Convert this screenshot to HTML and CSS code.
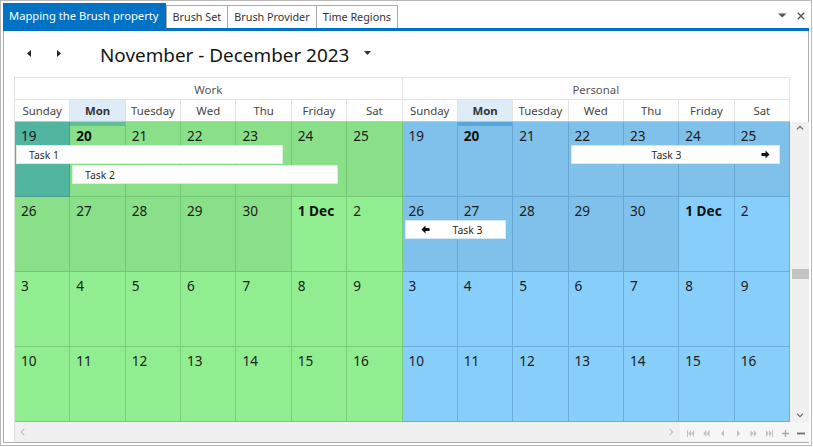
FILE: index.html
```html
<!DOCTYPE html>
<html>
<head>
<meta charset="utf-8">
<link rel="stylesheet" href="styles.css">
</head>
<body>
<div class="frame">
  <div class="tabbar">
    <div class="tabs">
      <div class="tab active">Mapping the Brush property</div>
      <div class="tab">Brush Set</div>
      <div class="tab">Brush Provider</div>
      <div class="tab">Time Regions</div>
    </div>
    <div class="tab-tools">
      <svg class="tool-caret" width="9" height="5" viewBox="0 0 9 5"><path d="M0 0.5 H8.5 L4.25 4.5 Z" fill="#555"/></svg>
      <svg class="tool-close" width="8" height="8" viewBox="0 0 8 8"><path d="M0.8 0.8 L7.2 7.2 M7.2 0.8 L0.8 7.2" stroke="#555" stroke-width="1.4" fill="none"/></svg>
    </div>
  </div>
  <div class="tabline"></div>
  <div class="panel">
    <div class="toolbar">
      <button class="nav-btn"><svg width="4" height="7" viewBox="0 0 4 7"><path d="M4 0 L0 3.5 L4 7 Z" fill="#222"/></svg></button>
      <button class="nav-btn"><svg width="4" height="7" viewBox="0 0 4 7"><path d="M0 0 L4 3.5 L0 7 Z" fill="#222"/></svg></button>
      <div class="title">November - December 2023</div>
      <svg class="title-caret" width="7" height="4" viewBox="0 0 7 4"><path d="M0 0 H7 L3.5 4 Z" fill="#333"/></svg>
    </div>
    <div class="scheduler">
      <div class="header">
        <div class="groups">
          <div class="group">Work</div>
          <div class="group">Personal</div>
        </div>
        <div class="days">
          <div class="day">Sunday</div>
          <div class="day today-head">Mon</div>
          <div class="day">Tuesday</div>
          <div class="day">Wed</div>
          <div class="day">Thu</div>
          <div class="day">Friday</div>
          <div class="day">Sat</div>
          <div class="day">Sunday</div>
          <div class="day today-head">Mon</div>
          <div class="day">Tuesday</div>
          <div class="day">Wed</div>
          <div class="day">Thu</div>
          <div class="day">Friday</div>
          <div class="day">Sat</div>
        </div>
      </div>
      <div class="header-corner"></div>
      <div class="body">
        <div class="c gs">19</div><div class="c gn today b">20</div><div class="c gn">21</div><div class="c gn">22</div><div class="c gn">23</div><div class="c gn">24</div><div class="c gn">25</div>
        <div class="c bn">19</div><div class="c bn today b">20</div><div class="c bn">21</div><div class="c bn">22</div><div class="c bn">23</div><div class="c bn">24</div><div class="c bn">25</div>

        <div class="c gn">26</div><div class="c gn">27</div><div class="c gn">28</div><div class="c gn">29</div><div class="c gn">30</div><div class="c gd b">1 Dec</div><div class="c gd">2</div>
        <div class="c bn">26</div><div class="c bn">27</div><div class="c bn">28</div><div class="c bn">29</div><div class="c bn">30</div><div class="c bd b">1 Dec</div><div class="c bd">2</div>

        <div class="c gd">3</div><div class="c gd">4</div><div class="c gd">5</div><div class="c gd">6</div><div class="c gd">7</div><div class="c gd">8</div><div class="c gd">9</div>
        <div class="c bd">3</div><div class="c bd">4</div><div class="c bd">5</div><div class="c bd">6</div><div class="c bd">7</div><div class="c bd">8</div><div class="c bd">9</div>

        <div class="c gd">10</div><div class="c gd">11</div><div class="c gd">12</div><div class="c gd">13</div><div class="c gd">14</div><div class="c gd">15</div><div class="c gd">16</div>
        <div class="c bd">10</div><div class="c bd">11</div><div class="c bd">12</div><div class="c bd">13</div><div class="c bd">14</div><div class="c bd">15</div><div class="c bd">16</div>

        <div class="appt appt-task1">Task 1</div>
        <div class="appt appt-task2">Task 2</div>
        <div class="appt appt-task3a cont-right"><span class="appt-label">Task 3</span><svg width="9" height="9" viewBox="0 0 9 9"><path d="M0.5 3 H4.5 V0.5 L8.5 4.5 L4.5 8.5 V6 H0.5 Z" fill="#111"/></svg></div>
        <div class="appt appt-task3b cont-left"><svg width="9" height="9" viewBox="0 0 9 9"><path d="M8.5 3 H4.5 V0.5 L0.5 4.5 L4.5 8.5 V6 H8.5 Z" fill="#111"/></svg><span class="appt-label">Task 3</span></div>
      </div>
      <div class="vscroll">
        <svg width="8" height="5" viewBox="0 0 8 5"><path d="M1 4.3 L4 1.3 L7 4.3" stroke="#666" stroke-width="1.2" fill="none"/></svg>
        <svg width="8" height="5" viewBox="0 0 8 5"><path d="M1 0.7 L4 3.7 L7 0.7" stroke="#666" stroke-width="1.2" fill="none"/></svg>
        <div class="vthumb"></div>
      </div>
      <div class="hbar">
        <div class="htrack">
          <svg width="5" height="8" viewBox="0 0 5 8"><path d="M4.3 0.8 L1.3 4 L4.3 7.2" stroke="#c4c4c4" stroke-width="1.2" fill="none"/></svg>
          <svg width="5" height="8" viewBox="0 0 5 8"><path d="M0.7 0.8 L3.7 4 L0.7 7.2" stroke="#c4c4c4" stroke-width="1.2" fill="none"/></svg>
        </div>
        <div class="pager">
          <span class="pg"><svg width="7" height="7" viewBox="0 0 7 7"><rect x="0" y="0" width="1" height="7" fill="#c2c2c2"/><path d="M4 0 L1.3 3.5 L4 7 Z M7 0 L4.3 3.5 L7 7 Z" fill="#c2c2c2"/></svg></span>
          <span class="pg"><svg width="7" height="7" viewBox="0 0 7 7"><path d="M3.3 0 L0.3 3.5 L3.3 7 Z M6.6 0 L3.6 3.5 L6.6 7 Z" fill="#c2c2c2"/></svg></span>
          <span class="pg"><svg width="3" height="7" viewBox="0 0 3 7"><path d="M3 0 L0 3.5 L3 7 Z" fill="#c2c2c2"/></svg></span>
          <span class="pg"><svg width="3" height="7" viewBox="0 0 3 7"><path d="M0 0 L3 3.5 L0 7 Z" fill="#c2c2c2"/></svg></span>
          <span class="pg"><svg width="7" height="7" viewBox="0 0 7 7"><path d="M0.4 0 L3.4 3.5 L0.4 7 Z M3.7 0 L6.7 3.5 L3.7 7 Z" fill="#c2c2c2"/></svg></span>
          <span class="pg"><svg width="7" height="7" viewBox="0 0 7 7"><path d="M0 0 L2.7 3.5 L0 7 Z M3 0 L5.7 3.5 L3 7 Z" fill="#c2c2c2"/><rect x="6" y="0" width="1" height="7" fill="#c2c2c2"/></svg></span>
          <span class="pg"><svg width="7" height="7" viewBox="0 0 7 7"><path d="M3.5 0 V7 M0 3.5 H7" stroke="#a9a9a9" stroke-width="1.3" fill="none"/></svg></span>
          <span class="pg"><svg width="8" height="7" viewBox="0 0 8 7"><path d="M0 3.5 H8" stroke="#6e6e6e" stroke-width="1.8" fill="none"/></svg></span>
        </div>
      </div>
    </div>
  </div>
</div>
</body>
</html>
```

FILE: styles.css
```css
* {
  box-sizing: border-box;
}

html, body {
  margin: 0;
  padding: 0;
  background: #ffffff;
}

body {
  font-family: "Noto Sans", "Open Sans", sans-serif;
  color: #222;
}

.frame {
  width: 812px;
  height: 446px;
  border: 1px solid #b9b9b9;
  padding: 2px;
  display: flex;
  flex-direction: column;
  background: #ffffff;
}

/* ---------- tabs ---------- */
.tabbar {
  height: 25px;
  display: flex;
  justify-content: space-between;
  align-items: flex-end;
  flex: none;
}

.tabs {
  display: flex;
  align-items: flex-end;
  height: 25px;
}

.tab {
  height: 23px;
  padding: 0 6px 1px 6px;
  display: flex;
  align-items: center;
  font-size: 10.8px;
  color: #333;
  background: #ffffff;
  border-top: 1px solid #a9a9a9;
  border-right: 1px solid #a9a9a9;
  white-space: nowrap;
}

.tab.active + .tab {
  border-left: 1px solid #a9a9a9;
}

.tab.active {
  height: 25px;
  border: none;
  background: #0072c6;
  color: #ffffff;
  padding: 0 7px 0 6px;
  font-size: 11.2px;
}

.tab-tools {
  align-self: center;
  display: flex;
  align-items: center;
  gap: 10px;
  padding-right: 4px;
}

.tool-caret {
  display: block;
}

.tool-close {
  display: block;
}

.tabline {
  height: 3px;
  background: #0072c6;
  flex: none;
}

/* ---------- panel ---------- */
.panel {
  flex: 1;
  border: 1px solid #ababab;
  border-top: none;
  display: flex;
  flex-direction: column;
  min-height: 0;
}

.toolbar {
  height: 46px;
  flex: none;
  display: flex;
  align-items: center;
  padding-left: 15px;
  padding-bottom: 1px;
}

.nav-btn {
  width: 20px;
  height: 20px;
  padding: 0;
  margin: 0 10px 0 0;
  border: none;
  background: transparent;
  display: flex;
  align-items: center;
  justify-content: center;
}

.nav-btn svg {
  display: block;
}

.title {
  margin-left: 21px;
  font-size: 18.9px;
  color: #151515;
  line-height: 26px;
  padding-top: 2px;
}

.title-caret {
  margin-left: 15px;
  display: block;
  margin-top: -1px;
}

/* ---------- scheduler ---------- */
.scheduler {
  margin-left: 10px;
  flex: 1;
  display: grid;
  grid-template-columns: 775px 19px;
  grid-template-rows: 45px 300px 20px;
  border-left: 1px solid #e0e0e0;
}

.header {
  grid-column: 1;
  grid-row: 1;
  border-top: 1px solid #e2e2e2;
}

.header-corner {
  grid-column: 2;
  grid-row: 1;
}

.groups {
  display: grid;
  grid-template-columns: 1fr 1fr;
  height: 22px;
}

.group {
  border-right: 1px solid #e2e2e2;
  border-bottom: 1px solid #e2e2e2;
  display: flex;
  align-items: center;
  justify-content: center;
  font-size: 11.4px;
  color: #555;
  padding-top: 1px;
}

.days {
  display: grid;
  grid-template-columns: repeat(14, 1fr);
  height: 22px;
  border-bottom: 1px solid #c4c4c4;
}

.day {
  border-right: 1px solid #e2e2e2;
  display: flex;
  align-items: center;
  justify-content: center;
  font-size: 11.4px;
  color: #444;
}

.day.today-head {
  background: #deecf8;
  font-weight: 700;
  color: #333;
}

.body {
  grid-column: 1;
  grid-row: 2;
  display: grid;
  grid-template-columns: repeat(14, 1fr);
  grid-template-rows: repeat(4, 75px);
  position: relative;
}

.c {
  border-right: 1px solid #76c976;
  border-bottom: 1px solid #76c976;
  font-size: 13.6px;
  line-height: 18px;
  padding: 5px 0 0 6px;
  color: #1c1c1c;
}

.c.gn { background: #89e089; border-color: #74c874; }
.c.gd { background: #90ee90; border-color: #79cf79; }
.c.gs { background: #52b5a0; border-color: #479e8c; }
.c.bn { background: #7fc1ea; border-color: #68a7d3; }
.c.bd { background: #87cefa; border-color: #6cacd9; }

.c.today {
  box-shadow: inset 0 4px 0 rgba(0, 110, 185, 0.3);
}

.c.b {
  font-weight: 700;
  color: #111;
}

.appt {
  position: absolute;
  height: 19px;
  background: #ffffff;
  border: 1px solid #d8f1d8;
  font-size: 10.4px;
  color: #2a2a2a;
  display: flex;
  align-items: center;
  white-space: nowrap;
}

.appt-task1 {
  left: 1px;
  top: 23px;
  width: 267px;
  padding-left: 12px;
}

.appt-task2 {
  left: 57px;
  top: 43px;
  width: 266px;
  padding-left: 12px;
}

.appt-task3a {
  left: 556px;
  top: 23px;
  width: 209px;
  border-color: #d4e9f7;
}

.appt-task3b {
  left: 390px;
  top: 98px;
  width: 101px;
  border-color: #d4e9f7;
}

.appt-label {
  flex: 1;
  text-align: center;
}

.appt svg {
  display: block;
  flex: none;
}

.appt.cont-right {
  padding: 0 9px 0 0;
}

.appt.cont-left {
  padding: 0 0 0 15px;
}

.vscroll {
  grid-column: 2;
  grid-row: 2;
  background: #f0f0f0;
  position: relative;
  display: flex;
  flex-direction: column;
  justify-content: space-between;
  align-items: center;
  padding: 3px 0 4px 1px;
}

.vscroll svg {
  display: block;
}

.vthumb {
  position: absolute;
  top: 147px;
  left: 2px;
  right: 0;
  height: 10px;
  background: #c3c3c3;
}

.hbar {
  grid-column: 1 / 3;
  grid-row: 3;
  display: flex;
}

.htrack {
  flex: 1;
  background: #f0f0f0;
  display: flex;
  justify-content: space-between;
  align-items: center;
  padding: 0 6px 0 5px;
}

.htrack svg {
  display: block;
}

.pager {
  width: 129px;
  background: #f6f6f6;
  display: flex;
  align-items: center;
  padding: 2px 0 0 3px;
}

.pg {
  flex: 1;
  display: flex;
  justify-content: center;
  align-items: center;
}

.pg svg {
  display: block;
}
```
